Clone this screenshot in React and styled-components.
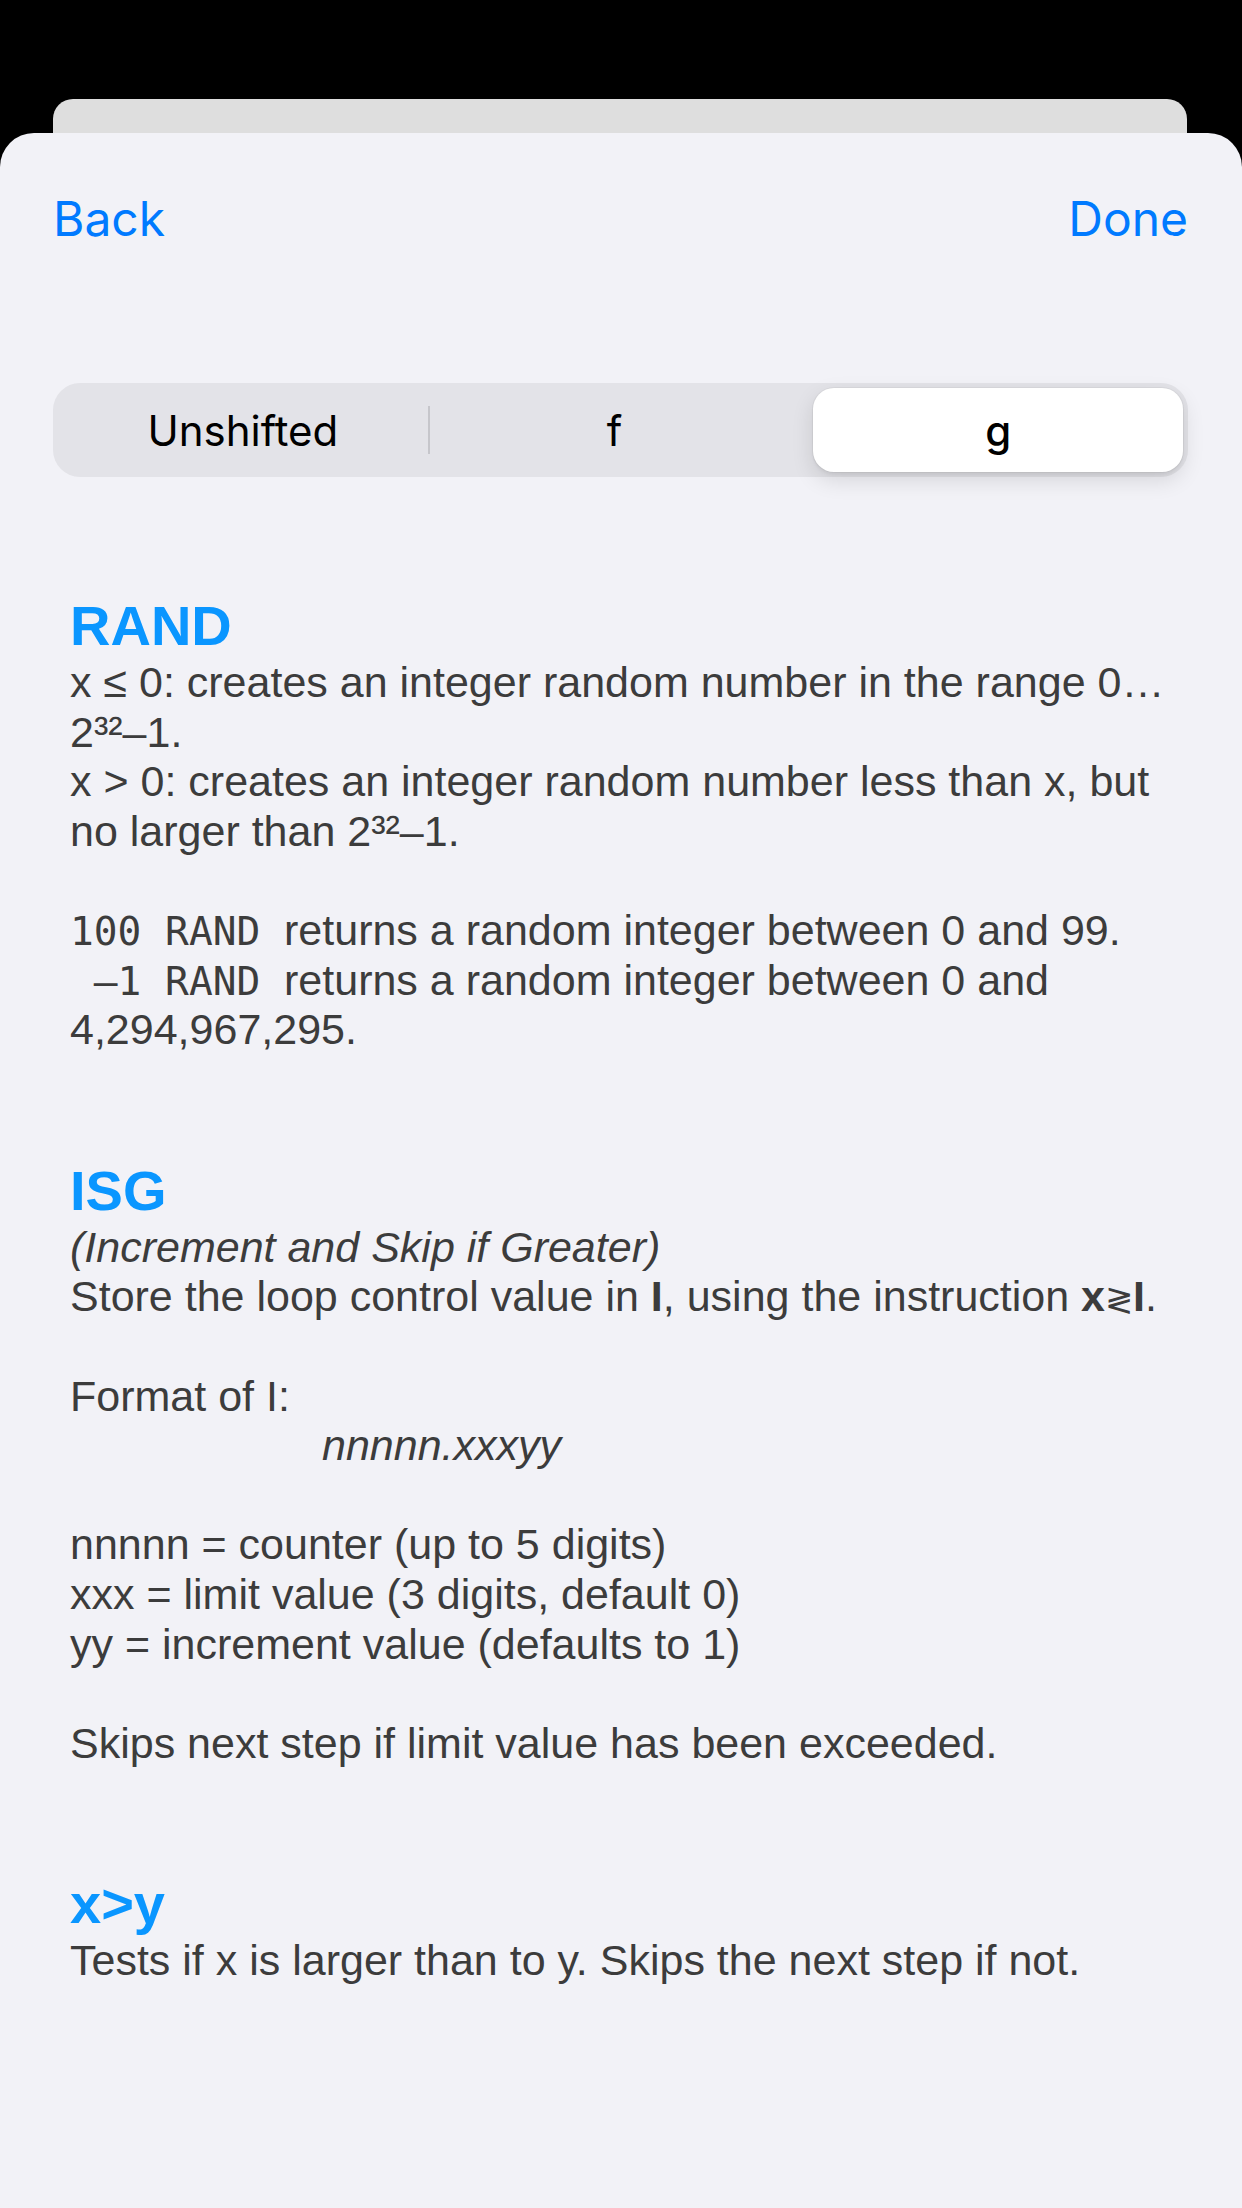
import React from "react";
import styled, { createGlobalStyle } from "styled-components";

const GlobalStyle = createGlobalStyle`
	html, body {
		margin: 0;
		padding: 0;
		background: #000;
	}
	body {
		font-family: "Liberation Sans", Arial, sans-serif;
	}
`;

const Page = styled.div`
	min-height: 100vh;
	box-sizing: border-box;
	padding-top: 99px;
	display: flex;
	flex-direction: column;
`;

const BackCard = styled.div`
	height: 34px;
	margin: 0 55px 0 53px;
	background: #dedede;
	border-radius: 20px 20px 0 0;
`;

const Sheet = styled.div`
	flex: 1;
	background: #f2f2f7;
	border-radius: 34px 34px 0 0;
	padding-bottom: 120px;
`;

const NavBar = styled.div`
	display: flex;
	justify-content: space-between;
	padding: 56px 54px 0 53px;
`;

const NavButton = styled.button`
	font-family: Inter, "Liberation Sans", sans-serif;
	font-size: 48px;
	line-height: 60px;
	color: #007aff;
	background: none;
	border: none;
	padding: 0;
`;

const Segmented = styled.div`
	margin: 134px 54px 0 53px;
	height: 94px;
	box-sizing: border-box;
	padding: 5px;
	background: #e3e3e8;
	border-radius: 27px;
	display: flex;
	align-items: center;
`;

const Segment = styled.div`
	flex: 1;
	height: 84px;
	margin-left: ${p => (p.$selected ? 12 : 0)}px;
	border-radius: 21px;
	display: flex;
	align-items: center;
	justify-content: center;
	font-family: Inter, "Liberation Sans", sans-serif;
	font-size: 42px;
	font-weight: ${p => (p.$selected ? 500 : 400)};
	color: #000;
	background: ${p => (p.$selected ? "#fff" : "transparent")};
	box-shadow: ${p =>
		p.$selected
			? "0 8px 22px rgba(0, 0, 0, 0.12), 0 3px 3px rgba(0, 0, 0, 0.04), 0 0 0 1px rgba(0, 0, 0, 0.04)"
			: "none"};
`;

const Divider = styled.div`
	flex: none;
	width: 2px;
	height: 48px;
	background: ${p => (p.$visible ? "#c6c6cb" : "transparent")};
`;

const Content = styled.div`
	padding: 118px 70px 0 70px;
`;

const Section = styled.section`
	& + & {
		margin-top: 105px;
	}
`;

const Heading = styled.h2`
	margin: 0 0 1px;
	font-size: 56px;
	line-height: 62px;
	font-weight: 700;
	color: #0a96ff;
`;

const Body = styled.div`
	font-size: 43px;
	line-height: 49.6px;
	color: #3c3c3c;
`;

const Line = styled.div`
	white-space: pre;
	height: 49.6px;
	padding-left: ${p => p.$indent || 0}px;
	font-style: ${p => (p.$italic ? "italic" : "normal")};
`;

const Mono = styled.span`
	font-family: "DejaVu Sans Mono", "Liberation Mono", monospace;
	font-size: 39.5px;
	line-height: 0;
`;

const Strong = styled.b`
	font-weight: 700;
`;

const Symbol = styled.span`
	font-weight: 400;
	font-size: 0.8em;
	line-height: 0;
`;

const segments = ["Unshifted", "f", "g"];

const SegmentedControl = ({ selected }) => (
	<Segmented>
		{segments.map((label, i) => (
			<React.Fragment key={label}>
				{i > 0 && <Divider $visible={i !== selected && i - 1 !== selected} />}
				<Segment $selected={i === selected}>{label}</Segment>
			</React.Fragment>
		))}
	</Segmented>
);

const App = () => (
	<Page>
		<GlobalStyle />
		<BackCard />
		<Sheet>
			<NavBar>
				<NavButton>Back</NavButton>
				<NavButton>Done</NavButton>
			</NavBar>
			<SegmentedControl selected={2} />
			<Content>
				<Section>
					<Heading>RAND</Heading>
					<Body>
						<Line>x ≤ 0: creates an integer random number in the range 0…</Line>
						<Line>2³²–1.</Line>
						<Line>x &gt; 0: creates an integer random number less than x, but</Line>
						<Line>no larger than 2³²–1.</Line>
						<Line />
						<Line><Mono>100 RAND </Mono>returns a random integer between 0 and 99.</Line>
						<Line><Mono> –1 RAND </Mono>returns a random integer between 0 and</Line>
						<Line>4,294,967,295.</Line>
					</Body>
				</Section>
				<Section>
					<Heading>ISG</Heading>
					<Body>
						<Line $italic>(Increment and Skip if Greater)</Line>
						<Line>Store the loop control value in <Strong>I</Strong>, using the instruction <Strong>x<Symbol>≷</Symbol>I</Strong>.</Line>
						<Line />
						<Line>Format of I:</Line>
						<Line $italic $indent={252}>nnnnn.xxxyy</Line>
						<Line />
						<Line>nnnnn = counter (up to 5 digits)</Line>
						<Line>xxx = limit value (3 digits, default 0)</Line>
						<Line>yy = increment value (defaults to 1)</Line>
						<Line />
						<Line>Skips next step if limit value has been exceeded.</Line>
					</Body>
				</Section>
				<Section>
					<Heading>x&gt;y</Heading>
					<Body>
						<Line>Tests if x is larger than to y. Skips the next step if not.</Line>
					</Body>
				</Section>
			</Content>
		</Sheet>
	</Page>
);

export default App;
